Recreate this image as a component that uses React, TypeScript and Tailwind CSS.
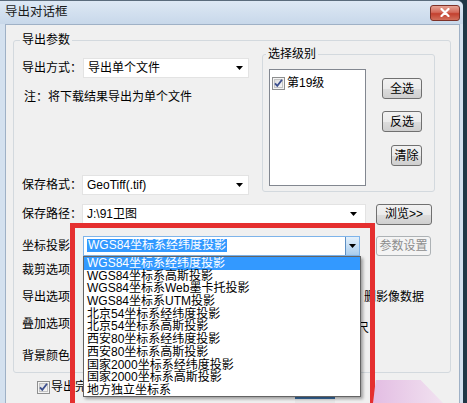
import React from "react";

const Arrow = () => (
  <svg width="7" height="4" viewBox="0 0 7 4" className="shrink-0">
    <path d="M0 0h7L3.5 4z" fill="#000" />
  </svg>
);

const Check = () => (
  <svg width="13" height="13" viewBox="0 0 13 13" className="shrink-0">
    <defs>
      <linearGradient id="cbg" x1="0" y1="0" x2="1" y2="1">
        <stop offset="0" stopColor="#dcdcdc" />
        <stop offset="1" stopColor="#f8f8f8" />
      </linearGradient>
    </defs>
    <rect x="0.5" y="0.5" width="12" height="12" fill="#f4f4f4" stroke="#8e8f8f" />
    <rect x="2.5" y="2.5" width="8" height="8" fill="url(#cbg)" stroke="#c4c4c4" />
    <path d="M3 6.3l2.3 2.6L10 2.8" fill="none" stroke="#3c4f8e" strokeWidth="1.8" />
  </svg>
);

const btn =
  "flex items-center justify-center border border-[#707070] rounded-[3px] bg-[linear-gradient(#f2f2f2,#ebebeb_50%,#dddddd_51%,#cfcfcf)] text-[12px] leading-none text-black";

const items = [
  "WGS84坐标系经纬度投影",
  "WGS84坐标系高斯投影",
  "WGS84坐标系Web墨卡托投影",
  "WGS84坐标系UTM投影",
  "北京54坐标系经纬度投影",
  "北京54坐标系高斯投影",
  "西安80坐标系经纬度投影",
  "西安80坐标系高斯投影",
  "国家2000坐标系经纬度投影",
  "国家2000坐标系高斯投影",
  "地方独立坐标系",
];

export default function App() {
  return (
    <div className="relative w-[467px] h-[403px] overflow-hidden bg-[#1f3746] text-[12px] text-black font-['Liberation_Sans','Noto_Sans_CJK_SC',sans-serif]">
      <div className="flex flex-col w-[463px] h-[403px] bg-[#d4e1ef] rounded-tr-[6px] border-t border-[#5a6b7c]">
        {/* title bar */}
        <div className="h-[23px] shrink-0 flex items-center justify-between pl-[5px] pr-[3px] bg-gradient-to-b from-[#dde8f4] to-[#c8d8ea] rounded-tr-[6px]">
          <span className="text-[12.5px] text-[#1a1a1a] leading-none">导出对话框</span>
          <div className="w-[30px] h-[16px] rounded-[3px] border border-[#7d3128] bg-[linear-gradient(#e6a394,#d46a5b_45%,#c3402f_55%,#d2705c)] flex items-center justify-center">
            <svg width="10" height="9" viewBox="0 0 10 9">
              <path d="M1.5 1l7 7M8.5 1l-7 7" stroke="#fff" strokeWidth="2.2" strokeLinecap="round" />
            </svg>
          </div>
        </div>

        {/* body */}
        <div className="flex-1 ml-[5px] mr-[3px] bg-[#f0f0f0] border border-[#9fb1c6] border-b-0 flex flex-col">
          <fieldset className="ml-[7px] mt-[8px] w-[438px] border border-[#d3d9de] rounded-[3px] pb-[9px]">
            <legend className="ml-[6px] px-[2px] leading-[14px]">导出参数</legend>

            {/* top section */}
            <div className="flex">
              <div className="flex flex-col ml-[8px] w-[227px]">
                <div className="mt-[11px] h-[20px] flex items-center">
                  <span className="w-[61px]">导出方式：</span>
                  <div className="w-[166px] h-[20px] bg-white border border-[#e3e3e3] flex items-center justify-between pl-[4px] pr-[5px]">
                    <span>导出单个文件</span>
                    <Arrow />
                  </div>
                </div>
                <div className="mt-[12px] ml-[2px] leading-[14px]">注：将下载结果导出为单个文件</div>
                <div className="mt-[71px] h-[20px] flex items-center">
                  <span className="w-[60px]">保存格式：</span>
                  <div className="w-[167px] h-[20px] bg-white border border-[#e3e3e3] flex items-center justify-between pl-[4px] pr-[5px]">
                    <span>GeoTiff(.tif)</span>
                    <Arrow />
                  </div>
                </div>
              </div>

              <fieldset className="ml-[13px] w-[173px] h-[145px] border border-[#d3d9de] rounded-[3px]">
                <legend className="ml-[3px] px-[2px] leading-[14px]">选择级别</legend>
                <div className="flex items-start">
                  <div className="ml-[6px] mt-[8px] w-[97px] h-[117px] bg-white border border-[#828790]">
                    <div className="flex items-center gap-[2px] pl-[2px] pt-[4px]">
                      <Check />
                      <span>第19级</span>
                    </div>
                  </div>
                  <div className="flex flex-col ml-[16px] mt-[17px] w-[40px]">
                    <div className={`${btn} h-[21px] w-[40px]`}>全选</div>
                    <div className={`${btn} h-[21px] w-[40px] mt-[12px]`}>反选</div>
                    <div className={`${btn} h-[21px] w-[31px] mt-[13px] self-end`}>清除</div>
                  </div>
                </div>
              </fieldset>
            </div>

            {/* save path */}
            <div className="mt-[9px] ml-[8px] h-[20px] flex items-center">
              <span className="w-[60px]">保存路径：</span>
              <div className="w-[284px] h-[20px] bg-white border border-[#e3e3e3] flex items-center justify-between pl-[4px] pr-[8px]">
                <span>J:\91卫图</span>
                <Arrow />
              </div>
              <div className={`${btn} ml-[10px] w-[56px] h-[21px]`}>浏览&gt;&gt;</div>
            </div>

            {/* projection */}
            <div className="mt-[11px] ml-[8px] h-[21px] flex items-center">
              <span className="w-[61px] whitespace-nowrap">坐标投影：</span>
              <div className="w-[277px] h-[20px] bg-white border border-[#7eb4ea] flex items-center justify-between pl-[3px]">
                <span className="bg-[#3399ff] text-white px-[1px] leading-[13px]">WGS84坐标系经纬度投影</span>
                <div className="w-[14px] h-[18px] border-l border-[#5d8fc4] bg-gradient-to-b from-[#e3f0fb] to-[#a9cdee] flex items-center justify-center">
                  <Arrow />
                </div>
              </div>
              <div className="ml-[16px] w-[55px] h-[20px] flex items-center justify-center border border-[#adb2b5] rounded-[3px] bg-[#f4f4f4] text-[#8d8d8d]">
                参数设置
              </div>
            </div>

            <div className="mt-[7px] ml-[8px] h-[14px] leading-[14px] flex">
              <span className="w-[60px]">裁剪选项：</span>
            </div>
            <div className="mt-[13px] ml-[8px] h-[14px] leading-[14px] flex whitespace-nowrap">
              <span className="w-[60px]">导出选项：</span>
              <span className="ml-[282px]">删影像数据</span>
            </div>
            <div className="mt-[13px] ml-[8px] h-[14px] leading-[14px] flex whitespace-nowrap">
              <span className="w-[60px]">叠加选项：</span>
              <span className="ml-[251px] mt-[4px]">比例尺</span>
            </div>
            <div className="mt-[18px] ml-[8px] h-[14px] leading-[14px] flex">
              <span className="w-[60px]">背景颜色：</span>
            </div>
          </fieldset>

          <div className="mt-[7px] ml-[31px] flex items-center gap-[1px] leading-[14px] whitespace-nowrap">
            <Check />
            <span>导出完成后打开所在文件夹</span>
          </div>
          <div className="mt-[2px] ml-[289px] w-[40px] h-[10px] border-t-[3px] border-[#3a6ea5] bg-[#e8e8e8]" />
        </div>
      </div>

      {/* dropdown list */}
      <div className="absolute left-[83px] top-[256px] w-[278px] h-[141px] bg-white border border-[#646464] shadow-[2px_2px_3px_rgba(0,0,0,0.35)] flex flex-col overflow-hidden">
        {items.map((t, i) => (
          <div
            key={t}
            className={
              i === 0
                ? "h-[12.7px] leading-[12.7px] pl-[3px] whitespace-nowrap bg-[#3399ff] text-white"
                : "h-[12.7px] leading-[12.7px] pl-[3px] whitespace-nowrap"
            }
          >
            {t}
          </div>
        ))}
      </div>

      {/* red highlight rectangle */}
      <div className="absolute left-[70px] top-[223px] w-[305px] h-[220px] border-[5px] border-[#e52f2f]" />

      {/* pink glare */}
      <div className="absolute left-[373px] top-[380px] w-[70px] h-[23px] bg-gradient-to-r from-[#e3bde3] to-[#f1e2f0] [clip-path:polygon(4%_0,68%_0,100%_100%,0_100%)]" />
    </div>
  );
}
